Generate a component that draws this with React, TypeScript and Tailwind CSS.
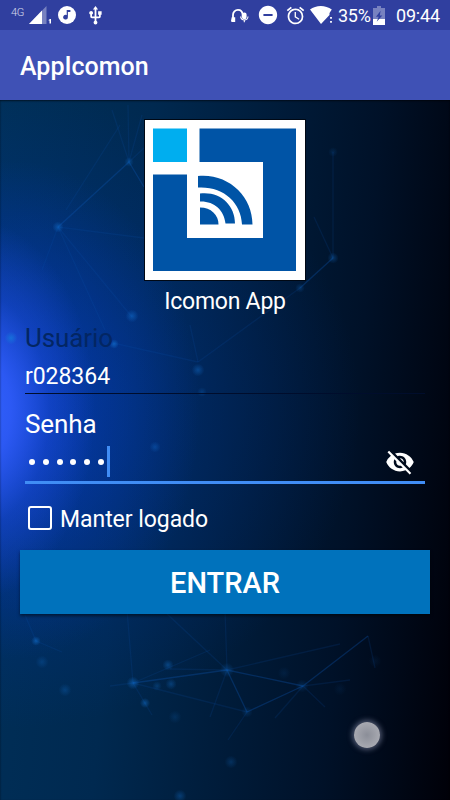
import React from "react";
import { MdAlarm, MdDoNotDisturbOn, MdUsb, MdVisibilityOff } from "react-icons/md";

function StatusBar() {
  return (
    <header className="flex h-[30px] items-center bg-[#303f9f] text-white">
      <span className="ml-[11px] mt-[-6px] w-[14px] text-[11px] font-light leading-none tracking-[-0.4px] text-white/80">4G</span>
      <svg className="ml-[4px] h-[18px] w-[23px]" viewBox="0 0 23 18">
        <path d="M17.5 0V18H0z" fill="#fff" fillOpacity=".35" />
        <path d="M13 4.6V18H0z" fill="#fff" />
        <path d="M19.6 14l1.4-1h1V17.5h-1.500v-3H19.6z" fill="#fff" />
      </svg>
      <svg className="ml-[6px] h-[18px] w-[18px]" viewBox="0 0 18 18">
        <circle cx="9" cy="9" r="9" fill="#fff" />
        <path d="M8.7 4H12.4V6H9.9V11.2A2.35 2.35 0 1 1 8.7 9.1z" fill="#303f9f" />
      </svg>
      <MdUsb className="ml-[9px] h-[21px] w-[21px]" />
      <svg className="ml-auto mr-[8px] h-[15px] w-[18px] shrink-0" viewBox="0 0 18 15">
        <path d="M2 10.5V7a5 5 0 0 1 5-5.2c3 0 4.400 1.8 4.600 4.700v3" fill="none" stroke="#fff" strokeWidth="1.8" />
        <path d="M0.700 9.200h3.500v4.800H1.200A1.200 1.200 0 0 1 0 13z" fill="#fff" />
        <rect x="11" y="4.600" width="4.600" height="6.600" rx="2.200" fill="#fff" />
        <path d="M9.600 8.600a3.700 3.400 0 0 0 7.400 0M13.300 12v2.200" fill="none" stroke="#fff" strokeWidth="1.1" />
      </svg>
      <MdDoNotDisturbOn className="mr-[6px] h-[22px] w-[22px] shrink-0" />
      <MdAlarm className="mr-[4px] h-[21px] w-[21px] shrink-0" />
      <svg className="mr-[5px] h-[18px] w-[23px] shrink-0" viewBox="0 0 23 18">
        <path d="M0 3.6C6-1.2 15.5-1.2 21.8 3.6L19.5 7v2L11 18z" fill="#fff" />
        <path d="M20.1 11h1.8v1.8h-1.8zM20.1 15h1.8v1.8h-1.8z" fill="#fff" />
      </svg>
      <span className="mt-[2px] w-[35px] shrink-0 text-[18px] leading-none tracking-[-0.3px]">35%</span>
      <svg className="mr-[11px] h-[19px] w-[12px] shrink-0" viewBox="0 0 12 19">
        <path d="M4 0h4v2h4v11H0V2h4z" fill="#fff" fillOpacity=".35" />
        <path d="M0 13h12v6H0z" fill="#fff" />
        <path d="M7.600 4.800L3 10.800h2.700l-2 5L9.300 9.500H6.800z" fill="#303f9f" />
      </svg>
      <span className="mt-[2px] w-[54px] shrink-0 text-[18px] leading-none tracking-[-0.2px]">09:44</span>
    </header>
  );
}

function Logo() {
  return (
    <svg className="h-[160px] w-[160px] bg-white shadow-[0_0_0_1px_#000814]" viewBox="0 0 160 160">
      <path d="M8 8.5H42V42H8z" fill="#00aeef" />
      <path d="M54.5 8.5H151V151H8V54.5H42V118H118V42H54.5z" fill="#0054a6" />
      <path d="M53 56C83 53 107.5 76 107.5 104.500H97C96 82 78 66 53 67.500z" fill="#0054a6" />
      <path d="M55 73.500C75 71 90 85 90 103.500H80.500C79 90 69 81 55 81.500z" fill="#0054a6" />
      <path d="M55 87.500C66 87.500 73.500 95 73.500 104.500H55z" fill="#0054a6" />
    </svg>
  );
}

const strong = [
  [58, 227, 129, 162], [133, 683, 227, 670], [227, 670, 303, 686], [227, 670, 247, 712],
  [247, 712, 303, 686], [303, 686, 368, 636], [333, 258, 300, 288], [129, 162, 144, 187],
];
const faint = [
  [58, 227, 144, 238], [58, 227, 105, 330], [58, 227, 42, 270], [58, 227, 132, 317],
  [129, 162, 112, 110], [129, 162, 128, 105], [129, 162, 142, 115], [66, 210, 120, 125],
  [129, 162, 145, 147], [333, 258, 333, 152], [333, 258, 314, 217], [300, 288, 198, 362],
  [113, 343, 198, 362], [198, 362, 190, 325], [133, 683, 127, 610], [227, 670, 165, 612],
  [227, 670, 210, 717], [133, 683, 247, 712], [133, 683, 110, 686], [133, 683, 152, 715],
  [227, 670, 170, 669], [227, 670, 340, 644], [303, 686, 325, 707], [247, 712, 228, 740],
  [368, 636, 375, 668], [25, 615, 36, 641], [36, 641, 62, 652], [227, 670, 225, 610],
  [133, 683, 210, 650], [303, 686, 275, 718], [303, 686, 350, 680],
];
const nodes = [
  [58, 227, 3.5, 0.7], [129, 162, 3, 0.5], [132, 316, 4, 0.7], [11, 338, 4, 1.2],
  [114, 344, 3, 0.9], [198, 370, 4, 0.6], [202, 392, 3, 0.35], [155, 447, 3.5, 0.5],
  [333, 152, 3, 0.25], [333, 258, 3.5, 0.5], [300, 288, 3, 0.4], [36, 641, 3, 0.8],
  [42, 662, 4, 0.35], [65, 690, 4, 0.4], [133, 683, 4, 0.75], [168, 665, 3.5, 0.6],
  [171, 684, 3.5, 0.5], [157, 686, 3, 0.4], [145, 703, 3.2, 0.7], [175, 717, 4, 0.25],
  [227, 670, 4.5, 0.45], [247, 712, 3.5, 0.3], [302, 686, 4, 0.3], [284, 673, 4, 0.15],
  [340, 689, 4, 0.12], [231, 762, 4, 0.35], [180, 796, 4, 0.5], [375, 661, 4, 0.12],
];

function Network() {
  return (
    <svg className="[grid-area:1/1] h-[700px] w-[450px]" viewBox="0 100 450 700">
      <defs>
        <radialGradient id="node">
          <stop offset="0" stopColor="#1478dc" />
          <stop offset="1" stopColor="#1478dc" stopOpacity="0" />
        </radialGradient>
      </defs>
      <g stroke="#0b58b4">
        {strong.map(([a, b, c, d], i) => (
          <line key={i} x1={a} y1={b} x2={c} y2={d} strokeWidth="1.3" strokeOpacity=".32" />
        ))}
        {faint.map(([a, b, c, d], i) => (
          <line key={i} x1={a} y1={b} x2={c} y2={d} strokeWidth="1.3" strokeOpacity=".15" />
        ))}
      </g>
      {nodes.map(([x, y, r, o], i) => (
        <circle key={i} cx={x} cy={y} r={r * 1.6} fill="url(#node)" opacity={o * 0.65} />
      ))}
    </svg>
  );
}

function LoginForm() {
  return (
    <div className="[grid-area:1/1] flex h-[700px] flex-col items-center px-5 pt-5 text-white">
      <Logo />
      <h2 className="mt-[8px] h-[28px] whitespace-nowrap text-[23px] leading-[28px] tracking-[-0.25px]">Icomon App</h2>
      <div className="mt-[7px] w-[400px]">
        <label className="block h-[30px] text-[26px] leading-[30px] tracking-[-0.1px] text-[#032663]">Usuário</label>
        <div className="mt-[10px] h-[31px] border-b border-[#000d2c] text-[23px] leading-[28px] tracking-[-0.05px]">r028364</div>
        <label className="mt-[15px] block h-[30px] text-[26px] leading-[30px] tracking-[-0.1px]">Senha</label>
        <div className="mt-[6px] flex h-[39px] items-start border-b-[3px] border-[#408df5]">
          <div className="ml-[4px] mt-[14px] flex gap-[7.8px]">
            {[0, 1, 2, 3, 4, 5].map((i) => (
              <i key={i} className="block h-[6px] w-[6px] rounded-full bg-white" />
            ))}
          </div>
          <i className="ml-[3px] mt-[1px] block h-[31px] w-[3px] bg-[#408df5]" />
          <MdVisibilityOff className="ml-auto mr-[10px] mt-[2px] h-[30px] w-[30px]" />
        </div>
        <div className="mt-[19px] flex h-[30px] items-center">
          <i className="ml-[3px] block h-[24px] w-[24px] rounded-[3px] border-[2.5px] border-white" />
          <span className="ml-[8px] mt-[3px] whitespace-nowrap text-[23px] leading-[30px] tracking-[-0.05px]">Manter logado</span>
        </div>
      </div>
      <button className="mt-[17px] h-[64px] w-full bg-[#0072bc] pt-[3px] text-[29px] font-medium leading-none text-white shadow-[0_2px_3px_rgba(0,0,0,0.5)]">ENTRAR</button>
    </div>
  );
}

export default function App() {
  return (
    <div className="h-[800px] w-[450px] overflow-hidden bg-[#000818] font-['Roboto',sans-serif]">
      <StatusBar />
      <div className="flex h-[70px] items-center bg-[#3f51b5] pl-5">
        <h1 className="pt-[3px] text-[25px] font-medium leading-none text-white">AppIcomon</h1>
      </div>
      <main className="relative grid h-[700px] bg-[radial-gradient(ellipse_120px_190px_at_-25px_310px,#3464ff_0%,rgba(48,92,250,0.9)_30%,rgba(35,80,235,0.4)_62%,rgba(15,62,200,0)_100%),radial-gradient(ellipse_190px_250px_at_10px_310px,rgba(10,66,220,0.6)_0%,rgba(8,62,200,0.4)_45%,rgba(4,52,165,0)_100%),radial-gradient(ellipse_360px_320px_at_0px_310px,rgba(0,60,190,0.45)_0%,rgba(0,52,155,0.35)_45%,rgba(0,40,120,0)_100%),linear-gradient(95deg,#003059_0%,#002950_30%,#001d3c_52%,#001128_75%,#000715_90%,#000008_100%)] shadow-[inset_0_1px_2px_rgba(0,0,0,0.6)]">
        <Network />
        <LoginForm />
        <i className="absolute left-[354px] top-[622px] h-[26px] w-[26px] rounded-full bg-[radial-gradient(circle,#8b8e98_0%,#b0b1b8_90%)] shadow-[0_0_5px_2px_rgba(150,155,185,0.5)]" />
      </main>
    </div>
  );
}
